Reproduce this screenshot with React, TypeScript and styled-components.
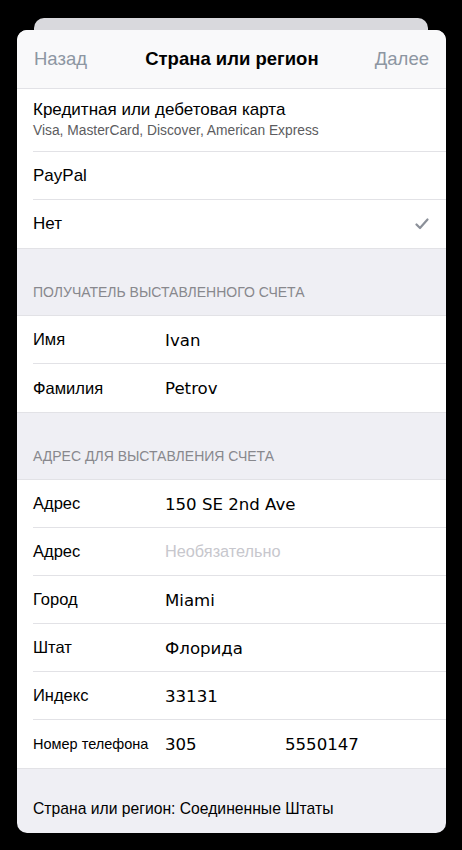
import React from "react";
import styled, { createGlobalStyle } from "styled-components";

const GlobalStyle = createGlobalStyle`
  html, body {
    margin: 0;
    padding: 0;
    background: #000;
  }
  body {
    font-family: "Liberation Sans", Arial, sans-serif;
    -webkit-font-smoothing: antialiased;
  }
`;

interface Field {
  label: string;
  value?: string;
  placeholder?: string;
  extra?: string;
  small?: boolean;
}

const recipient: Field[] = [
  { label: "Имя", value: "Ivan" },
  { label: "Фамилия", value: "Petrov" },
];

const address: Field[] = [
  { label: "Адрес", value: "150 SE 2nd Ave" },
  { label: "Адрес", placeholder: "Необязательно" },
  { label: "Город", value: "Miami" },
  { label: "Штат", value: "Флорида" },
  { label: "Индекс", value: "33131" },
  { label: "Номер телефона", value: "305", extra: "5550147", small: true },
];

const CheckIcon = () => (
  <svg width="14" height="12" viewBox="0 0 14 12" fill="none">
    <path
      d="M1.5 6.5 L5 10 L12.5 1.5"
      stroke="#8b9099"
      strokeWidth="2.2"
      strokeLinecap="round"
      strokeLinejoin="round"
    />
  </svg>
);

export default function App() {
  return (
    <Screen>
      <GlobalStyle />
      <BackCard />
      <Sheet>
        <NavBar>
          <NavButton>Назад</NavButton>
          <NavTitle>Страна или регион</NavTitle>
          <NavButton>Далее</NavButton>
        </NavBar>

        <Group $noTop>
          <Row>
            <RowInner $tall>
              <Stack>
                <RowText>Кредитная или дебетовая карта</RowText>
                <SubText>Visa, MasterCard, Discover, American Express</SubText>
              </Stack>
            </RowInner>
          </Row>
          <Row>
            <RowInner>
              <RowText>PayPal</RowText>
            </RowInner>
          </Row>
          <Row>
            <RowInner>
              <RowText>Нет</RowText>
              <Check>
                <CheckIcon />
              </Check>
            </RowInner>
          </Row>
        </Group>

        <SectionHeader>Получатель выставленного счета</SectionHeader>
        <Group>
          {recipient.map((f, i) => (
            <FieldRow key={i} field={f} />
          ))}
        </Group>

        <SectionHeader>Адрес для выставления счета</SectionHeader>
        <Group>
          {address.map((f, i) => (
            <FieldRow key={i} field={f} />
          ))}
        </Group>

        <Footer>Страна или регион: Соединенные Штаты</Footer>
      </Sheet>
    </Screen>
  );
}

const FieldRow = ({ field }: { field: Field }) => (
  <Row>
    <RowInner>
      <Label $small={field.small}>{field.label}</Label>
      {field.value && <Value>{field.value}</Value>}
      {field.placeholder && <Placeholder>{field.placeholder}</Placeholder>}
      {field.extra && <ExtraValue>{field.extra}</ExtraValue>}
    </RowInner>
  </Row>
);

const Screen = styled.div`
  width: 462px;
  height: 850px;
  background: #000;
  overflow: hidden;
  display: flex;
  flex-direction: column;
`;

const BackCard = styled.div`
  margin: 18px 34px 0 34px;
  height: 12px;
  background: #d9d9dd;
  border-radius: 10px 10px 0 0;
`;

const Sheet = styled.div`
  margin: 0 16px 0 17px;
  height: 803px;
  background: #efeff4;
  border-radius: 10px;
  overflow: hidden;
  display: flex;
  flex-direction: column;
`;

const NavBar = styled.div`
  height: 59px;
  box-sizing: border-box;
  background: #f9f9fa;
  border-bottom: 1px solid #e2e2e6;
  display: flex;
  align-items: center;
  justify-content: space-between;
  padding: 0 17px 0 17px;
`;

const NavButton = styled.div`
  font-size: 18.5px;
  color: #8d96a2;
`;

const NavTitle = styled.div`
  font-size: 18.5px;
  font-weight: 700;
  color: #000;
  margin-left: 2px;
`;

const Group = styled.div<{ $noTop?: boolean }>`
  background: #fff;
  border-top: ${(p) => (p.$noTop ? "none" : "1px solid #e2e2e6")};
  border-bottom: 1px solid #e2e2e6;
`;

const Row = styled.div`
  padding-left: 16px;
  &:last-child > div {
    border-bottom: none;
  }
`;

const RowInner = styled.div<{ $tall?: boolean }>`
  height: ${(p) => (p.$tall ? "63px" : "48px")};
  box-sizing: border-box;
  border-bottom: 1px solid #e2e2e6;
  display: flex;
  align-items: center;
  padding-right: 17px;
`;

const Stack = styled.div`
  display: flex;
  flex-direction: column;
  gap: 3px;
  margin-top: -3px;
`;

const RowText = styled.div`
  flex: 1;
  font-size: 17px;
  color: #000;
  white-space: nowrap;
`;

const SubText = styled.div`
  font-size: 13.8px;
  color: #5c5c60;
  white-space: nowrap;
`;

const Check = styled.div`
  display: flex;
  align-items: center;
`;

const SectionHeader = styled.div`
  height: 66px;
  box-sizing: border-box;
  display: flex;
  align-items: flex-end;
  padding: 0 16px 15px 16px;
  font-size: 14px;
  color: #88888d;
  text-transform: uppercase;
`;

const Label = styled.div<{ $small?: boolean }>`
  width: 132px;
  flex-shrink: 0;
  font-size: ${(p) => (p.$small ? "14.5px" : "16.5px")};
  color: #000;
  white-space: nowrap;
`;

const Value = styled.div`
  width: 120px;
  flex-shrink: 0;
  font-family: "DejaVu Sans", Verdana, sans-serif;
  font-size: 16.6px;
  color: #000;
  white-space: nowrap;
  margin-top: 1px;
`;

const ExtraValue = styled(Value)`
  width: auto;
`;

const Placeholder = styled.div`
  font-size: 16.3px;
  color: #c7c7cd;
  white-space: nowrap;
`;

const Footer = styled.div`
  flex: 1;
  display: flex;
  align-items: flex-start;
  padding: 31px 16px 0 16px;
  font-size: 15.7px;
  color: #000;
`;
